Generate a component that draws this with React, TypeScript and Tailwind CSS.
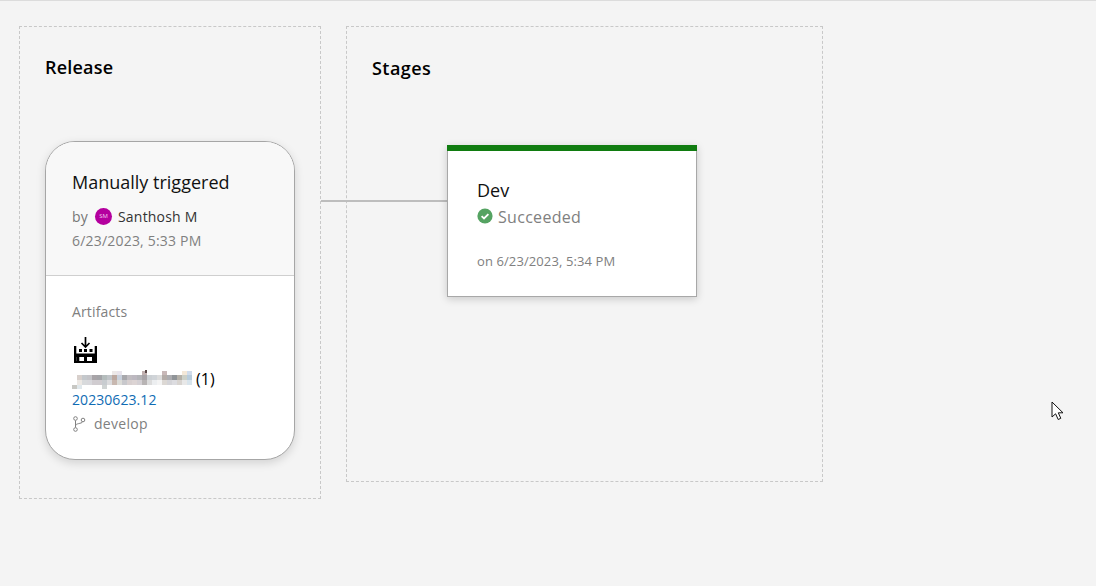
const row0: [number, string][] = [[112, "#ece8e8"], [117, "#e8e4ec"], [142, "#c0b0b0"], [162, "#c8b8b8"], [182, "#f4e8d8"], [187, "#d0dcec"]];
const row1 = ["#d8d0cc", "#c4c8cc", "#c4c4c8", "#a8a4a8", "#a4a4a8", "#b4bcbc", "#c0c4c8", "#bca8a0", "#c8d0dc", "#a8a8ac", "#c0bcc0", "#bcb8c0", "#b4b4b8", "#a8a4a8", "#ccd0d4", "#d0d4d8", "#dcdcdc", "#b4aca8", "#acacb0", "#909498", "#b4b0a8", "#ccd0c8", "#b8ccdc"];
const row2 = ["#ece8e4", "#d8dadc", "#d8d8dc", "#d0ccd0", "#d0ccd0", "#c8ccd0", "#dcdcde", "#c8b8b0", "#dcdcd8", "#c8c8cc", "#d8d0d0", "#dcd4d4", "#d4d0d4", "#b8b4b4", "#dcdcdc", "#eceef0", "#f4f4f4", "#dcd8d4", "#d4d4d8", "#dcdce0", "#d8d4d0", "#e8e8e8", "#d8e4ec"];
const row3: [number, string][] = [[72, "#c8c8c4"], [77, "#e0e8ec"], [102, "#d0d4d4"]];

export default function App() {
  return (
    <div className="relative flex h-[586px] items-start gap-[25px] overflow-hidden border-t border-[#dcdcdc] bg-[#f4f4f4] pl-[19px] pt-[25px] font-['Open_Sans','Noto_Sans',sans-serif]">
      <section className="h-[473px] w-[302px] border border-dashed border-[#c8c8c8] pl-[25px] pt-[26px]">
        <h2 className="text-[18px] leading-[28px] font-semibold text-black tracking-[0.2px]">Release</h2>
        <div className="mt-[60px] h-[319px] w-[250px] overflow-hidden rounded-[30px] border border-[#a6a6a6] bg-white shadow-[0_3px_10px_rgba(0,0,0,0.14)]">
          <div className="h-[134px] border-b border-[#cfcfcf] bg-[#f8f8f8] pl-[26px] pt-[26px]">
            <div className="text-[18px] leading-[28px] text-[#111111]">Manually triggered</div>
            <div className="mt-[10px] flex h-[20px] items-center text-[14px] tracking-[0.2px]">
              <span className="text-[#767676]">by</span>
              <span className="ml-[7px] flex h-[17px] w-[17px] items-center justify-center rounded-full bg-[#b4009e] text-[6px] text-[#f3c9ee] tracking-normal">SM</span>
              <span className="ml-[6px] text-[#333333]">Santhosh M</span>
            </div>
            <div className="mt-[5px] text-[14px] leading-[20px] text-[#808080] tracking-[0.2px]">6/23/2023, 5:33 PM</div>
          </div>
          <div className="pl-[26px] pt-[26px]">
            <div className="text-[14px] leading-[20px] text-[#808080] tracking-[0.15px]">Artifacts</div>
            <svg className="ml-[2px] mt-[15px] block" width="23" height="26" viewBox="0 0 23 26">
              <path d="M11.5 0v9.5M7.5 6l4 4 4-4" fill="none" stroke="#000" strokeWidth="1.7" />
              <rect x="0" y="9" width="2.3" height="17" fill="#000" />
              <rect x="20.7" y="9" width="2.3" height="17" fill="#000" />
              <rect x="5" y="12" width="3" height="3" fill="#000" />
              <rect x="10" y="12" width="3" height="3" fill="#000" />
              <rect x="15.5" y="12" width="3" height="3" fill="#000" />
              <rect x="0" y="16.5" width="23" height="3.5" fill="#000" />
              <rect x="0" y="24" width="23" height="2" fill="#000" />
              <rect x="2.3" y="20" width="3" height="4" fill="#000" />
              <rect x="10" y="20" width="3" height="4" fill="#000" />
              <rect x="18" y="20" width="3" height="4" fill="#000" />
            </svg>
            <div className="mt-[6px] flex h-[20px] items-center text-[16px] text-black">
              <svg width="120" height="20" viewBox="72 370 120 20" className="shrink-0" shapeRendering="crispEdges">
                {row0.map(([x, c]) => <rect key={x} x={x} y="372" width="5" height="4" fill={c} />)}
                {row1.map((c, i) => <rect key={i} x={77 + i * 5} y="376" width="5" height="5" fill={c} />)}
                {row2.map((c, i) => <rect key={i} x={77 + i * 5} y="381" width="5" height="5" fill={c} />)}
                {row3.map(([x, c]) => <rect key={x} x={x} y="386" width="5" height="4" fill={c} />)}
                <rect x="145" y="371" width="2" height="3" fill="#5a4a4a" />
              </svg>
              <span className="ml-[4px] tracking-[0.1px]">(1)</span>
            </div>
            <div className="mt-[1px] text-[14px] leading-[20px] text-[#0f6cb4] tracking-[0.07px]">20230623.12</div>
            <div className="mt-[4px] flex items-center text-[14px] leading-[20px] text-[#808080]">
              <svg width="14" height="16" viewBox="0 0 14 16" fill="none" stroke="#808080" strokeWidth="1">
                <circle cx="3.5" cy="2.5" r="1.8" />
                <circle cx="3.5" cy="13.5" r="1.8" />
                <circle cx="11" cy="4" r="1.8" />
                <path d="M3.5 4.5v7M3.5 10c0-3 6-2 7.2-4.2" />
              </svg>
              <span className="ml-[8px] tracking-[0.3px]">develop</span>
            </div>
          </div>
        </div>
      </section>

      <section className="relative h-[456px] w-[477px] border border-dashed border-[#c8c8c8] pl-[25px] pt-[27px]">
        <h2 className="text-[18px] leading-[28px] font-semibold text-black tracking-[0.45px]">Stages</h2>
        <div className="absolute left-[-26px] top-[173px] h-[2px] w-[126px] bg-[#bdbdbd]" />
        <div className="relative ml-[75px] mt-[63px] h-[152px] w-[250px] border border-t-0 border-[#a8a8a8] bg-white shadow-[0_2px_8px_rgba(0,0,0,0.18)]">
          <div className="-mx-px h-[6px] bg-[#107c10]" />
          <div className="pl-[29px] pt-[25px]">
            <div className="text-[18px] leading-[28px] text-[#111111]">Dev</div>
            <div className="flex h-[24px] items-center">
              <svg width="16" height="16" viewBox="0 0 16 16" className="shrink-0">
                <circle cx="8" cy="8" r="7.6" fill="#55a362" />
                <path d="M4.6 8.2l2.4 2.3 4.4-4.4" fill="none" stroke="#fff" strokeWidth="1.8" />
              </svg>
              <span className="ml-[5px] mt-[2px] text-[16px] text-[#808080] tracking-[0.3px]">Succeeded</span>
            </div>
            <div className="mt-[24px] text-[13px] leading-[18px] text-[#808080] tracking-[0.1px]">on 6/23/2023, 5:34 PM</div>
          </div>
        </div>
      </section>

      <svg className="absolute left-[1051px] top-[400px]" width="13" height="20" viewBox="0 0 13 20">
        <path d="M1 1v15l3.6-3.2 2.6 5.7 2.6-1.2-2.5-5.5h4.7L1 1z" fill="#fff" stroke="#111" strokeWidth="1" />
      </svg>
    </div>
  );
}
